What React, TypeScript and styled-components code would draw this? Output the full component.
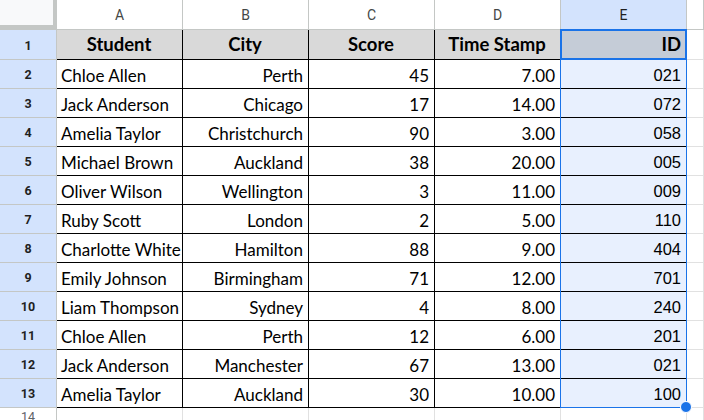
import React from "react";
import styled, { createGlobalStyle, css } from "styled-components";

const Global = createGlobalStyle`
  html, body { margin: 0; padding: 0; background: #ffffff; }
  body { width: 704px; height: 420px; overflow: hidden; }
`;

type Row = [string, string, number, string, string];

const rows: Row[] = [
  ["Chloe Allen", "Perth", 45, "7.00", "021"],
  ["Jack Anderson", "Chicago", 17, "14.00", "072"],
  ["Amelia Taylor", "Christchurch", 90, "3.00", "058"],
  ["Michael Brown", "Auckland", 38, "20.00", "005"],
  ["Oliver Wilson", "Wellington", 3, "11.00", "009"],
  ["Ruby Scott", "London", 2, "5.00", "110"],
  ["Charlotte White", "Hamilton", 88, "9.00", "404"],
  ["Emily Johnson", "Birmingham", 71, "12.00", "701"],
  ["Liam Thompson", "Sydney", 4, "8.00", "240"],
  ["Chloe Allen", "Perth", 12, "6.00", "201"],
  ["Jack Anderson", "Manchester", 67, "13.00", "021"],
  ["Amelia Taylor", "Auckland", 30, "10.00", "100"],
];

type Pos = { $r: number; $c: number };

const place = css<Pos>`
  grid-row: ${(p) => p.$r};
  grid-column: ${(p) => p.$c};
  box-sizing: border-box;
`;

const Sheet = styled.div`
  display: grid;
  grid-template-columns: 57px repeat(5, 126px) 1fr;
  grid-template-rows: 30px 30px repeat(12, 29px) 1fr;
  width: 704px;
  height: 420px;
  overflow: hidden;
`;

const Corner = styled.div<Pos>`
  ${place};
  background: #f8f9fa;
  border-right: 4px solid #c4c7c5;
  border-bottom: 5px solid #c4c7c5;
`;

const ColHeader = styled.div<Pos & { $selected?: boolean }>`
  ${place};
  display: flex;
  align-items: center;
  justify-content: center;
  font-family: Roboto, "Liberation Sans", sans-serif;
  font-size: 14px;
  color: ${(p) => (p.$selected ? "#1f1f1f" : "#444746")};
  background: ${(p) => (p.$selected ? "#d3e3fd" : "#ffffff")};
  border-right: 1px solid #c4c7c5;
  border-bottom: 1px solid #c4c7c5;
  padding-top: 1px;
`;

const RowHeader = styled.div<Pos & { $selected?: boolean }>`
  ${place};
  display: flex;
  align-items: center;
  justify-content: center;
  font-family: Roboto, "Liberation Sans", sans-serif;
  font-size: 12.5px;
  font-weight: ${(p) => (p.$selected ? 700 : 400)};
  color: ${(p) => (p.$selected ? "#1f1f1f" : "#5f6368")};
  background: ${(p) => (p.$selected ? "#d3e3fd" : "#ffffff")};
  border-right: 1px solid #c4c7c5;
  border-bottom: 1px solid #c4c7c5;
  padding-top: 1px;
`;

const Cell = styled.div<
  Pos & {
    $align?: "left" | "center" | "right";
    $head?: boolean;
    $selected?: boolean;
    $arial?: boolean;
  }
>`
  ${place};
  display: flex;
  align-items: flex-end;
  justify-content: ${(p) =>
    p.$align === "right" ? "flex-end" : p.$align === "center" ? "center" : "flex-start"};
  padding: 0 5px 3px 4px;
  font-family: ${(p) =>
    p.$arial ? '"Liberation Sans", Arial, sans-serif' : 'Lato, "Open Sans", sans-serif'};
  font-size: ${(p) => (p.$arial ? "16.5px" : "17px")};
  line-height: 19px;
  font-weight: ${(p) => (p.$head ? 700 : 400)};
  color: #000000;
  white-space: nowrap;
  overflow: hidden;
  border-right: 1px solid #000000;
  border-bottom: 1px solid #000000;
  ${(p) =>
    p.$head
      ? css`
          background: ${p.$selected ? "#c5ccd7" : "#d9d9d9"};
          font-size: 18.5px;
          padding-bottom: 5px;
        `
      : css`
          background: ${p.$selected ? "#e8f0fe" : "#ffffff"};
        `}
`;

const BlankCell = styled.div<Pos & { $lastRow?: boolean }>`
  ${place};
  background: #ffffff;
  border-right: 1px solid #e1e1e1;
  border-bottom: ${(p) => (p.$lastRow ? "none" : "1px solid #e1e1e1")};
`;

const Selection = styled.div`
  grid-column: 6;
  grid-row: 2 / 15;
  margin: -1px 0 0 -1px;
  border: 1px solid #1a73e8;
  pointer-events: none;
  position: relative;
  z-index: 2;
`;

const ActiveCell = styled.div`
  grid-column: 6;
  grid-row: 2;
  margin: -1px 0 0 -1px;
  border: 2px solid #1a73e8;
  pointer-events: none;
  z-index: 3;
`;

const Handle = styled.div`
  position: absolute;
  right: -6px;
  bottom: -6px;
  width: 10px;
  height: 10px;
  border-radius: 50%;
  background: #1a73e8;
  border: 1px solid #ffffff;
`;

const letters = ["A", "B", "C", "D", "E"];
const heads = ["Student", "City", "Score", "Time Stamp", "ID"];

export default function App() {
  return (
    <>
      <Global />
      <Sheet>
        <Corner $r={1} $c={1} />
        {letters.map((l, i) => (
          <ColHeader key={l} $r={1} $c={i + 2} $selected={l === "E"}>
            {l}
          </ColHeader>
        ))}
        <ColHeader $r={1} $c={7} />

        <RowHeader $r={2} $c={1} $selected>
          1
        </RowHeader>
        {heads.map((h, i) => (
          <Cell
            key={h}
            $r={2}
            $c={i + 2}
            $head
            $align={i === 4 ? "right" : "center"}
            $selected={i === 4}
          >
            {h}
          </Cell>
        ))}
        <BlankCell $r={2} $c={7} />

        {rows.map((r, idx) => {
          const rr = idx + 3;
          return (
            <React.Fragment key={idx}>
              <RowHeader $r={rr} $c={1} $selected>
                {idx + 2}
              </RowHeader>
              <Cell $r={rr} $c={2} $align="left">
                {r[0]}
              </Cell>
              <Cell $r={rr} $c={3} $align="right">
                {r[1]}
              </Cell>
              <Cell $r={rr} $c={4} $align="right">
                {r[2]}
              </Cell>
              <Cell $r={rr} $c={5} $align="right">
                {r[3]}
              </Cell>
              <Cell $r={rr} $c={6} $align="right" $selected $arial>
                {r[4]}
              </Cell>
              <BlankCell $r={rr} $c={7} />
            </React.Fragment>
          );
        })}

        <RowHeader $r={15} $c={1}>
          14
        </RowHeader>
        {letters.map((l, i) => (
          <BlankCell key={l} $r={15} $c={i + 2} $lastRow />
        ))}
        <BlankCell $r={15} $c={7} $lastRow />

        <Selection>
          <Handle />
        </Selection>
        <ActiveCell />
      </Sheet>
    </>
  );
}
